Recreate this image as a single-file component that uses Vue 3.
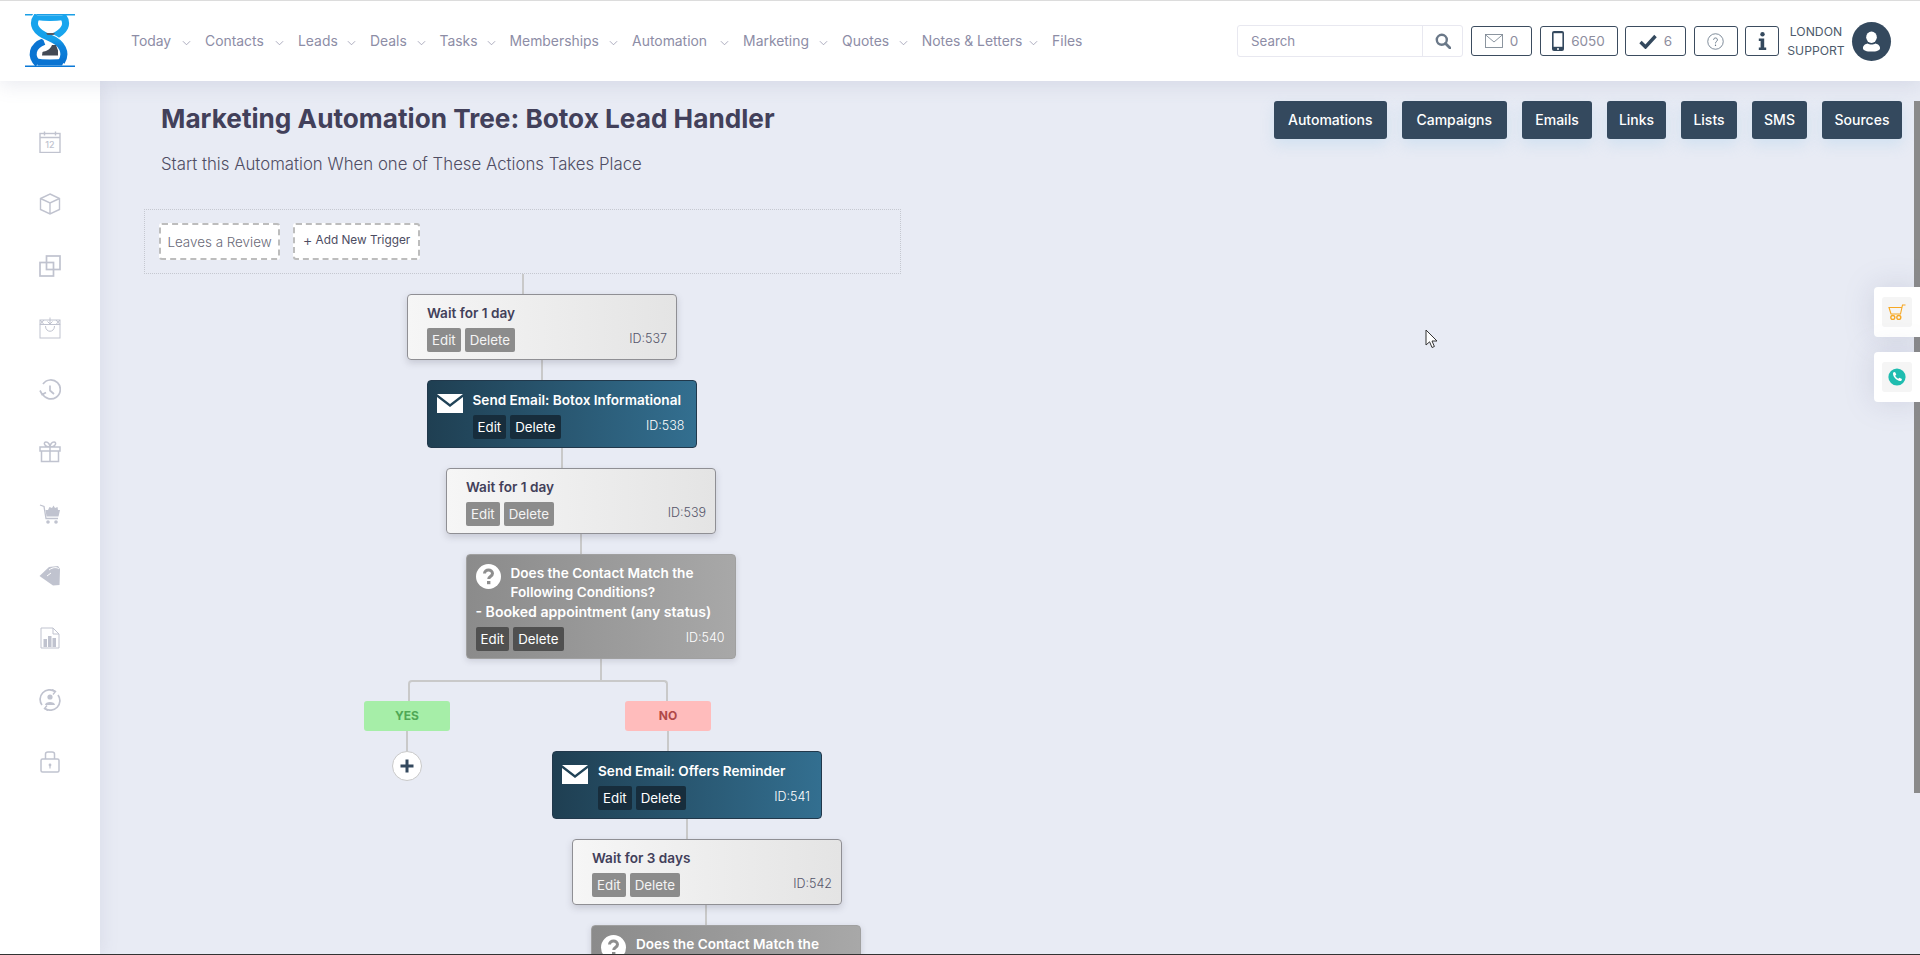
<script setup>
const navItems = [
  { label: 'Today', w: 74, caret: true }, { label: 'Contacts', w: 93, caret: true }, { label: 'Leads', w: 72, caret: true },
  { label: 'Deals', w: 69.5, caret: true }, { label: 'Tasks', w: 70, caret: true }, { label: 'Memberships', w: 122.6, caret: true },
  { label: 'Automation', w: 111, caret: true }, { label: 'Marketing', w: 99, caret: true }, { label: 'Quotes', w: 79.6, caret: true },
  { label: 'Notes & Letters', w: 130.4, caret: true }, { label: 'Files', w: 30, caret: false }
]
const tabs = [
  { label: 'Automations', w: 112.5 }, { label: 'Campaigns', w: 105.5 }, { label: 'Emails', w: 70 }, { label: 'Links', w: 59 },
  { label: 'Lists', w: 56 }, { label: 'SMS', w: 55 }, { label: 'Sources', w: 80 }
]
const sideIcons = ['calendar', 'cube', 'copy', 'bag', 'history', 'gift', 'cart', 'tag', 'report', 'user', 'lock']
const upper = [
  { type: 'wait', title: 'Wait for 1 day', id: 537, indent: 0, line: 21 },
  { type: 'email', title: 'Send Email: Botox Informational', id: 538, indent: 19.5, line: 20 },
  { type: 'wait', title: 'Wait for 1 day', id: 539, indent: 39, line: 20 },
  { type: 'cond', title: 'Does the Contact Match the Following Conditions?', sub: '- Booked appointment (any status)', id: 540, indent: 58.5, line: 20 }
]
const lower = [
  { type: 'email', title: 'Send Email: Offers Reminder', id: 541, indent: 0, line: 0 },
  { type: 'wait', title: 'Wait for 3 days', id: 542, indent: 20, line: 20 },
  { type: 'cond', title: 'Does the Contact Match the Following Conditions?', sub: '', id: 543, indent: 39, line: 20 }
]
</script>

<template>
  <div class="page">
    <header class="topbar">
      <svg class="logo" viewBox="0 0 50 53" width="50" height="53">
        <defs>
          <linearGradient id="logoS" x1="0" y1="0" x2="0" y2="1">
            <stop offset="0" stop-color="#18a5ee" />
            <stop offset="0.5" stop-color="#15a0ea" />
            <stop offset="0.65" stop-color="#0e84dc" />
            <stop offset="1" stop-color="#0a74d2" />
          </linearGradient>
        </defs>
        <rect x="0" y="0" width="50" height="1.5" fill="#1b9fe6" />
        <rect x="0" y="51.5" width="50" height="1.5" fill="#0b78d6" />
        <path d="M13 50 C5 42 7 32 19 27.5" fill="none" stroke="#0a74d2" stroke-width="7" />
        <path d="M37.5 1.5 C44 10 40 17 28 23" fill="none" stroke="#18a5ee" stroke-width="7" />
        <path d="M12.5 1.5 C6 10 10 18 24 23.5 C38 29 42 39 36.5 48" fill="none" stroke="#ffffff" stroke-width="9" />
        <path d="M12.5 1.5 C6 10 10 18 24 23.5 C38 29 42 39 36.5 48" fill="none" stroke="url(#logoS)" stroke-width="7" />
        <path d="M10 1.5 H40 L39 6 Q25 8 11 6 Z" fill="#18a5ee" />
        <path d="M9 44 Q25 47 41 44 L37 51.5 H13 Z" fill="#0a74d2" />
        <path d="M21 19 H30 L28.5 21 H22.5 Z" fill="#555a64" />
        <path d="M17 41.5 L17.5 38 C21 37 25 36 27 31 L31 31 L33 36.5 L33 41.5 Z" fill="#444a55" />
      </svg>

      <nav class="nav">
        <a v-for="item in navItems" :key="item.label" class="nav-item" :style="{ width: item.w + 'px' }">
          <span>{{ item.label }}</span>
          <svg v-if="item.caret" class="caret" viewBox="0 0 10 6" width="9" height="6"><path d="M1 1 L5 5 L9 1" fill="none" stroke="#9a9ab0" stroke-width="0.9" /></svg>
        </a>
      </nav>

      <div class="tools">
        <div class="search">
          <span class="search-text">Search</span>
          <span class="search-btn">
            <svg viewBox="0 0 16 16" width="16" height="16"><circle cx="6.8" cy="6.8" r="5" fill="none" stroke="#6a7888" stroke-width="2.4" /><path d="M10.5 10.5 L15 15" stroke="#6a7888" stroke-width="2.8" stroke-linecap="round" /></svg>
          </span>
        </div>
        <div class="tool t-mail">
          <svg viewBox="0 0 18 14" width="18" height="14"><rect x="0.5" y="0.5" width="17" height="13" fill="none" stroke="#7f8a96" stroke-width="0.9" /><path d="M0.5 0.8 L9 8 L17.5 0.8" fill="none" stroke="#7f8a96" stroke-width="0.9" /></svg>
          <span>0</span>
        </div>
        <div class="tool t-phone">
          <svg viewBox="0 0 12 20" width="12" height="20"><rect x="0" y="0" width="12" height="20" rx="2" fill="#34495e" /><rect x="1.6" y="2.2" width="8.8" height="13.6" fill="#fff" /><circle cx="6" cy="17.9" r="1" fill="#fff" /></svg>
          <span>6050</span>
        </div>
        <div class="tool t-check">
          <svg viewBox="0 0 18 15" width="18" height="15"><path d="M1.5 8 L6.5 13 L16.5 2" fill="none" stroke="#34495e" stroke-width="3.4" /></svg>
          <span>6</span>
        </div>
        <div class="tool t-help">
          <svg viewBox="0 0 18 18" width="17" height="17"><circle cx="9" cy="9" r="8.2" fill="none" stroke="#56687a" stroke-width="0.8" /><path d="M7 7.2 C7 4.6 11 4.6 11 7.2 C11 9 9 9 9 11" fill="none" stroke="#56687a" stroke-width="0.9" /><circle cx="9" cy="13" r="0.7" fill="#56687a" /></svg>
        </div>
        <div class="tool t-info">
          <svg viewBox="0 0 9 18" width="9" height="18"><circle cx="4.5" cy="2.2" r="2.2" fill="#34495e" /><path d="M0.8 6.5 H6.2 V15.5 H8.2 V18 H0.8 V15.5 H2.6 V9 H0.8 Z" fill="#34495e" /></svg>
        </div>
        <div class="who"><span>LONDON</span><span>SUPPORT</span></div>
        <div class="avatar">
          <svg viewBox="0 0 20 22" width="19" height="21"><ellipse cx="10" cy="6.5" rx="5.6" ry="6" fill="#fff" /><path d="M1 18 C1 14.5 4 13.4 6 13 C8 14.6 12 14.6 14 13 C16 13.4 19 14.5 19 18 C19 20.5 15 21.5 10 21.5 C5 21.5 1 20.5 1 18 Z" fill="#fff" /></svg>
        </div>
      </div>
    </header>

    <div class="body">
      <aside class="sidebar">
        <svg v-for="name in sideIcons" :key="name" class="side-icon" viewBox="0 0 22 22" width="22" height="22" fill="none" stroke="#c0c3cf" stroke-width="1.4">
          <template v-if="name === 'calendar'">
            <rect x="1" y="2.5" width="20" height="19" /><path d="M1 6.5 H21 M5.5 0.5 V4.5 M16.5 0.5 V4.5" />
            <text x="11" y="17" text-anchor="middle" class="cal-num">12</text>
          </template>
          <template v-else-if="name === 'cube'">
            <path d="M11 1 L20.5 5.5 V16.5 L11 21 L1.5 16.5 V5.5 Z M1.5 5.5 L11 10 L20.5 5.5 M11 10 V21" />
          </template>
          <template v-else-if="name === 'copy'">
            <rect x="7.5" y="1" width="13.5" height="13.5" stroke-width="1.7" /><rect x="1" y="7.5" width="13.5" height="13.5" stroke-width="1.7" />
          </template>
          <template v-else-if="name === 'bag'">
            <rect x="1" y="3" width="20" height="18" stroke-width="1" /><path d="M1 7.5 H21 M11 0.5 V7 M8.5 4.5 L11 7 L13.5 4.5 M6.5 9 C6.5 16 15.5 16 15.5 9 M1 3 L5 7.5 M5 3 L1 7.5 M17 3 L21 7.5 M21 3 L17 7.5" stroke-width="1" />
          </template>
          <template v-else-if="name === 'history'">
            <path d="M3.2 14.5 A9.5 9.5 0 1 0 4 5" stroke-width="1.7" /><path d="M1 11.5 L3.2 15.5 L7 13.5 M11 6.5 V11.5 L15 15" stroke-width="1.7" />
          </template>
          <template v-else-if="name === 'gift'">
            <path d="M2.5 10 V20.5 H19.5 V10 M1 6 H21 V10 H1 Z M11 6 V20.5 M11 6 C5 6 4 1 7 1 C9.5 1 11 4 11 6 C11 4 12.5 1 15 1 C18 1 17 6 11 6" stroke-width="1.5" />
          </template>
          <template v-else-if="name === 'cart'">
            <path d="M1 2 L5 3.5 L7 15.5 H19" stroke-width="1.3" />
            <path d="M6.5 7 H9 L10.5 4 L13 5 L14.5 2.5 L16 5 L18.5 4 L19 7 H21 L19.5 13.5 H7.5 Z" fill="#c0c3cf" stroke="none" />
            <circle cx="9" cy="19" r="1.8" fill="#c0c3cf" stroke="none" /><circle cx="17" cy="19" r="1.8" fill="#c0c3cf" stroke="none" />
          </template>
          <template v-else-if="name === 'tag'">
            <path d="M0.5 11 L10 2 L19 1 L21 4 L20.5 20 L14 20.5 Z" fill="#c0c3cf" stroke="none" />
            <path d="M10 5 C14 2 18 2 20 4 M8 11 L12 8" stroke="#fff" stroke-width="1" />
          </template>
          <template v-else-if="name === 'report'">
            <path d="M2 1 H14 L20 7 V21 H2 Z M14 1 V7 H20" stroke-width="1" />
            <rect x="4.5" y="12" width="3.5" height="8" fill="#c0c3cf" stroke="none" /><rect x="9" y="9" width="3.5" height="11" fill="#c0c3cf" stroke="none" /><rect x="13.5" y="11" width="3.5" height="9" fill="#c0c3cf" stroke="none" />
          </template>
          <template v-else-if="name === 'user'">
            <path d="M3 16 A9.5 9.5 0 0 1 16 2.5 M19 6 A9.5 9.5 0 0 1 6 19.5" stroke-width="1.7" /><path d="M13 0.5 L16.5 2.5 L14 5.5 M9 21.5 L5.5 19.5 L8 16.5" stroke-width="1.4" />
            <circle cx="11" cy="8" r="2.6" fill="#c0c3cf" stroke="none" /><path d="M6 16 C6 12 16 12 16 16 Z" fill="#c0c3cf" stroke="none" />
          </template>
          <template v-else>
            <rect x="2" y="8" width="18" height="13" rx="1.5" stroke-width="1.5" /><path d="M6.5 8 V3 C6.5 1.5 7.5 1 9 1 H13 C14.5 1 15.5 1.5 15.5 3 V8" stroke-width="1.5" />
            <circle cx="11" cy="14" r="1.4" fill="#c0c3cf" stroke="none" /><path d="M11 14 V17.5" stroke-width="1.2" />
          </template>
        </svg>
      </aside>

      <main class="main">
        <div class="head-row">
          <div class="heading">
            <h1>Marketing Automation Tree: Botox Lead Handler</h1>
            <p>Start this Automation When one of These Actions Takes Place</p>
          </div>
          <div class="tabs">
            <a v-for="t in tabs" :key="t.label" class="tab" :style="{ width: t.w + 'px' }">{{ t.label }}</a>
          </div>
        </div>

        <section class="triggers">
          <span class="trigger leaves">Leaves a Review</span>
          <span class="trigger add"><i>+</i> Add New Trigger</span>
        </section>

        <div class="tree">
          <template v-for="n in upper" :key="n.id">
            <div class="vline" :style="{ height: n.line + 'px', marginLeft: (n.indent + 114.5) + 'px' }"></div>
            <div class="card" :class="n.type" :style="{ marginLeft: n.indent + 'px' }">
              <svg v-if="n.type === 'email'" class="card-icon mail" viewBox="0 0 26 19" width="26" height="19"><path d="M0 0 H26 L13 10 Z M0 3 L13 13 L26 3 V19 H0 Z" fill="#fff" /></svg>
              <svg v-if="n.type === 'cond'" class="card-icon quest" viewBox="0 0 25 25" width="25" height="25"><circle cx="12.5" cy="12.5" r="12.5" fill="#fff" /><path d="M8.5 9.5 C8.5 4.8 16.5 4.8 16.5 9.5 C16.5 12.5 12.7 12.5 12.7 15" fill="none" stroke="#8e8e8e" stroke-width="3" /><rect x="11" y="17" width="3.4" height="3.2" fill="#8e8e8e" /></svg>
              <div class="card-title">{{ n.title }}</div>
              <div v-if="n.sub" class="card-sub">{{ n.sub }}</div>
              <div class="card-foot">
                <span class="act">Edit</span><span class="act">Delete</span>
                <span class="card-id">ID:{{ n.id }}</span>
              </div>
            </div>
          </template>

          <div class="branches">
            <div class="stem"></div>
            <div class="fork"></div>
            <div class="branch-row">
              <div class="branch yes-branch">
                <span class="tagbox yes">YES</span>
                <div class="vline branch-line"></div>
                <span class="plus">
                  <svg viewBox="0 0 14 14" width="14" height="14"><path d="M7 0.5 V13.5 M0.5 7 H13.5" stroke="#34495e" stroke-width="3" /></svg>
                </span>
              </div>
              <div class="branch no-branch">
                <span class="tagbox no">NO</span>
                <div class="vline branch-line"></div>
                <div class="lower">
                  <template v-for="n in lower" :key="n.id">
                    <div v-if="n.line" class="vline" :style="{ height: n.line + 'px', marginLeft: (n.indent + 114) + 'px' }"></div>
                    <div class="card" :class="n.type" :style="{ marginLeft: n.indent + 'px' }">
                      <svg v-if="n.type === 'email'" class="card-icon mail" viewBox="0 0 26 19" width="26" height="19"><path d="M0 0 H26 L13 10 Z M0 3 L13 13 L26 3 V19 H0 Z" fill="#fff" /></svg>
                      <svg v-if="n.type === 'cond'" class="card-icon quest" viewBox="0 0 25 25" width="25" height="25"><circle cx="12.5" cy="12.5" r="12.5" fill="#fff" /><path d="M8.5 9.5 C8.5 4.8 16.5 4.8 16.5 9.5 C16.5 12.5 12.7 12.5 12.7 15" fill="none" stroke="#8e8e8e" stroke-width="3" /><rect x="11" y="17" width="3.4" height="3.2" fill="#8e8e8e" /></svg>
                      <div class="card-title">{{ n.title }}</div>
                      <div v-if="n.sub" class="card-sub">{{ n.sub }}</div>
                      <div class="card-foot">
                        <span class="act">Edit</span><span class="act">Delete</span>
                        <span class="card-id">ID:{{ n.id }}</span>
                      </div>
                    </div>
                  </template>
                </div>
              </div>
            </div>
          </div>
        </div>

        <div class="float-tabs">
          <div class="float-tab"><span class="float-in">
            <svg viewBox="0 0 18 16" width="18" height="16"><path d="M17.5 1 H14.5 L12.5 10 H3 L1 3.5 H13.5" fill="none" stroke="#f7a823" stroke-width="1.1" /><circle cx="4.8" cy="13.5" r="2" fill="none" stroke="#f7a823" stroke-width="1.4" /><circle cx="10.8" cy="13.5" r="2" fill="none" stroke="#f7a823" stroke-width="1.4" /></svg>
          </span></div>
          <div class="float-tab"><span class="float-in">
            <svg viewBox="0 0 18 18" width="18" height="18"><circle cx="9" cy="9" r="8.6" fill="#1fbdb0" /><path d="M5.2 4.6 L7 4 L8.3 6.6 L7.2 7.7 C7.8 9 8.9 10.2 10.3 10.8 L11.4 9.7 L14 11 L13.4 12.8 C10 14.4 3.8 8.4 5.2 4.6 Z" fill="#fff" /></svg>
          </span></div>
        </div>

        <svg class="cursor" viewBox="0 0 13 20" width="13" height="20"><path d="M1 1 V16 L4.6 12.8 L7 18.5 L9.4 17.5 L7 12 H12 Z" fill="#fff" stroke="#333" stroke-width="1" /></svg>
      </main>
    </div>
    <div class="scroll-thumb"></div>
    <div class="bottom-line"></div>
  </div>
</template>

<style>
html, body { margin: 0; padding: 0; overflow: hidden; background: #e8ebf4; }
</style>

<style scoped>
.page {
  position: relative;
  width: 1920px;
  height: 955px;
  overflow: hidden;
  font-family: Inter, "Open Sans", sans-serif;
  background: #e8ebf4;
  border-top: 1px solid #dcdcdc;
  box-sizing: border-box;
}
.topbar {
  position: relative;
  z-index: 3;
  display: flex;
  align-items: flex-start;
  height: 80px;
  background: #fff;
  box-shadow: 0 4px 18px rgba(120, 125, 160, 0.16);
}
.logo { margin: 13px 0 0 25px; flex: none; }
.nav { display: flex; margin: 32px 0 0 56px; flex: none; }
.nav-item {
  display: flex;
  align-items: center;
  box-sizing: border-box;
  font-size: 13.9px;
  line-height: 16px;
  color: #8d8da6;
  white-space: nowrap;
}
.caret { margin-left: auto; margin-right: 14px; margin-top: 3px; flex: none; }
.tools { display: flex; align-items: flex-start; margin-left: auto; margin-right: 29px; }
.search {
  display: flex;
  width: 226px;
  height: 32px;
  margin-top: 24px;
  box-sizing: border-box;
  border: 1px solid #e8e8f0;
  border-radius: 3px;
}
.search-text { flex: 1; padding-left: 13px; font-size: 13.3px; line-height: 30px; color: #8d8da6; }
.search-btn { width: 39px; display: flex; align-items: center; justify-content: center; border-left: 1px solid #e8e8f0; }
.tool {
  display: flex;
  align-items: center;
  justify-content: center;
  gap: 7px;
  height: 30px;
  margin-top: 25px;
  margin-left: 7.5px;
  box-sizing: border-box;
  border: 1px solid #3b4c5f;
  border-radius: 3px;
  font-size: 13.5px;
  color: #8d8d9e;
}
.t-mail { width: 61px; margin-left: 8px; }
.t-phone { width: 78px; }
.t-check { width: 61px; }
.t-help { width: 44px; }
.t-info { width: 34px; }
.who {
  display: flex;
  flex-direction: column;
  align-items: center;
  width: 60px;
  margin: 21px 0 0 7px;
  font-size: 12.2px;
  line-height: 19px;
  color: #4d5a6c;
}
.avatar {
  width: 39px;
  height: 39px;
  margin: 21px 0 0 6px;
  border-radius: 50%;
  background: #34495e;
  display: flex;
  align-items: center;
  justify-content: center;
}
.body { display: flex; height: 874px; }
.sidebar {
  position: relative;
  z-index: 2;
  flex: none;
  width: 100px;
  box-sizing: border-box;
  padding-top: 50px;
  background: #fff;
  display: flex;
  flex-direction: column;
  align-items: center;
  gap: 40px;
  box-shadow: 2px 0 16px rgba(120, 125, 160, 0.13);
}
.side-icon { flex: none; }
.cal-num { font-family: Inter, sans-serif; font-size: 9px; fill: #c0c3cf; stroke: none; font-weight: 500; }
.main { position: relative; flex: 1; min-width: 0; }
.head-row { display: flex; justify-content: space-between; padding: 20px 18px 0 61px; height: 128px; box-sizing: border-box; }
.heading { margin-top: 1px; }
.heading h1 { margin: 0; font-size: 26.2px; line-height: 34px; font-weight: 700; color: #42405a; white-space: nowrap; }
.heading p { margin: 16px 0 0; font-size: 16.8px; line-height: 24px; font-weight: 300; color: #4f4d63; white-space: nowrap; }
.tabs { display: flex; gap: 15px; }
.tab {
  height: 38px;
  line-height: 38px;
  text-align: center;
  background: #34495e;
  color: #fff;
  border-radius: 3px;
  font-size: 14px;
  font-weight: 500;
  box-shadow: 0 6px 14px rgba(150, 200, 235, 0.28);
}
.triggers {
  display: flex;
  align-items: flex-start;
  gap: 13px;
  margin-left: 44px;
  width: 757px;
  height: 65px;
  box-sizing: border-box;
  padding: 13px 14px;
  border: 1px dotted #c5c8d0;
}
.trigger {
  box-sizing: border-box;
  height: 37px;
  background: #fff;
  border: 2px dashed #bdbdbd;
  border-radius: 3px;
  white-space: nowrap;
  display: flex;
  align-items: center;
  justify-content: center;
  color: #6a6a78;
}
.leaves { width: 121px; font-size: 13.4px; font-weight: 300; }
.add { width: 127px; font-size: 11.8px; color: #4c4c62; padding-bottom: 3px; }
.add i { font-style: normal; font-size: 15px; margin-right: 3px; font-weight: 300; }
.tree { margin-left: 307px; width: 600px; }
.vline { width: 2px; background: #c9c9c9; }
.tree > .vline:first-child { height: 20px !important; }
.card {
  position: relative;
  width: 270px;
  box-sizing: border-box;
  border-radius: 4px;
  font-size: 13.6px;
}
.wait {
  height: 66px;
  padding: 9px 9px 0 19px;
  background: linear-gradient(90deg, #f6f6f6, #e4e4e4);
  border: 1px solid #8f8f94;
  box-shadow: 0 3px 7px rgba(80, 80, 100, 0.22);
}
.email {
  height: 68px;
  padding: 10px 11px 0 45px;
  background: linear-gradient(90deg, #1f3f52, #336f90);
  border: 1px solid #21384b;
  color: #fff;
}
.cond {
  height: 105px;
  padding: 9px 10px 0 9px;
  background: linear-gradient(90deg, #8b8b8b, #a8a8a8);
  border: 1px solid #a0a0a0;
  color: #fff;
  box-shadow: 0 2px 6px rgba(80, 80, 100, 0.18);
}
.card-title { font-weight: 600; line-height: 19px; color: #42405a; white-space: nowrap; }
.email .card-title { color: #fff; }
.cond .card-title { color: #fff; white-space: normal; margin-left: 35px; width: 215px; }
.card-sub { font-weight: 600; font-size: 14.1px; line-height: 20px; white-space: nowrap; }
.card-foot { display: flex; align-items: flex-start; gap: 4px; margin-top: 5px; }
.act {
  height: 24px;
  line-height: 24px;
  padding: 0 5px;
  border-radius: 2px;
  background: #8c8c8c;
  color: #f4f4f4;
  font-size: 13.3px;
}
.email .act { background: #172d3c; color: #fff; }
.cond .act { background: #505050; color: #fff; }
.card-id { margin-left: auto; font-size: 12.5px; line-height: 21px; font-weight: 300; color: #55556a; }
.email .card-id, .cond .card-id { color: #fff; }
.card-icon { position: absolute; }
.mail { left: 9px; top: 13px; }
.quest { left: 9px; top: 9px; }
.stem { width: 2px; height: 21px; background: #c9c9c9; margin-left: 192.5px; }
.fork {
  box-sizing: border-box;
  width: 260px;
  height: 21px;
  margin-left: 1px;
  border: 2px solid #c9c9c9;
  border-bottom: 0;
  border-radius: 4px 4px 0 0;
}
.branch-row { display: flex; margin-left: -43px; }
.branch { display: flex; flex-direction: column; }
.yes-branch { align-items: center; width: 86px; }
.no-branch { margin-left: 175px; }
.tagbox {
  width: 86px;
  height: 30px;
  line-height: 30px;
  border-radius: 3px;
  text-align: center;
  font-size: 12px;
  font-weight: 700;
}
.yes { background: #a6eea8; color: #50a856; }
.no { background: #ffbcbc; color: #b04848; }
.branch-line { height: 20px; }
.no-branch .branch-line { margin-left: 42px; }
.plus {
  box-sizing: border-box;
  width: 30px;
  height: 30px;
  border-radius: 50%;
  background: #fff;
  border: 1px solid #c9c9c9;
  display: flex;
  align-items: center;
  justify-content: center;
}
.lower { margin-left: -73px; }
.float-tabs { position: absolute; top: 206px; right: 0; display: flex; flex-direction: column; gap: 15px; z-index: 4; }
.float-tab {
  width: 46px;
  height: 50px;
  box-sizing: border-box;
  padding: 10px 0 0 8px;
  background: #fff;
  border-radius: 4px 0 0 4px;
  box-shadow: 0 0 30px rgba(120, 125, 160, 0.22);
}
.float-in { display: flex; width: 30px; height: 30px; align-items: center; justify-content: center; background: #f5f5f5; border-radius: 3px; }
.cursor { position: absolute; left: 1325px; top: 248px; }
.scroll-thumb { position: absolute; right: 0; top: 100px; width: 6px; height: 692px; background: #8a8a8a; z-index: 1; }
.bottom-line { position: absolute; left: 0; right: 0; bottom: 0; height: 1px; background: #333; z-index: 5; }
</style>
